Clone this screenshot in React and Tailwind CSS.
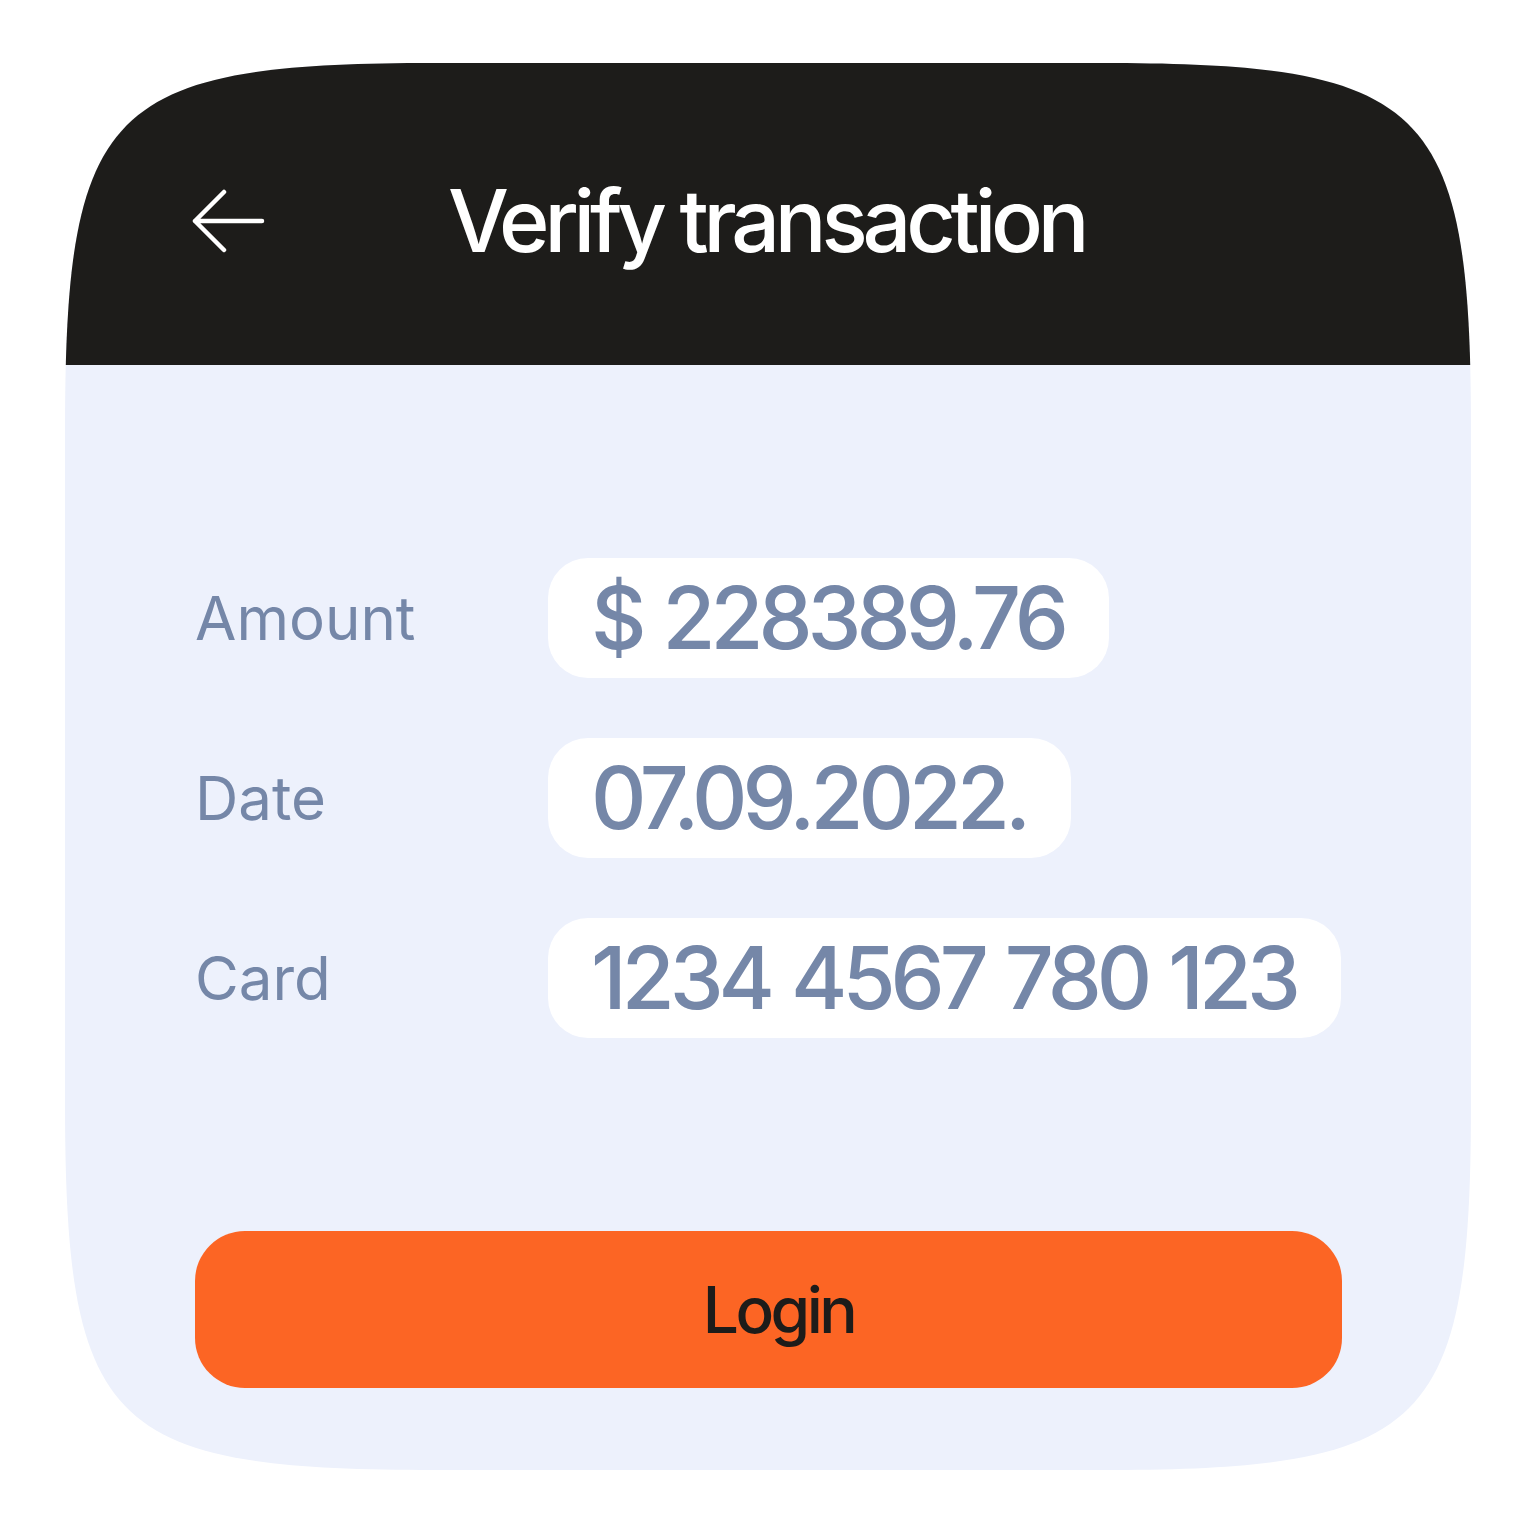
import React from "react";

const rows = [
  { label: "Amount", value: "$ 228389.76" },
  { label: "Date", value: "07.09.2022." },
  { label: "Card", value: "1234 4567 780 123" },
];

const BackArrow = () => (
  <svg width="74" height="64" viewBox="0 0 74 64" fill="none">
    <path
      d="M70 32H3M32 3L3 32L32 61"
      stroke="white"
      strokeWidth="4.5"
      strokeLinecap="round"
      strokeLinejoin="round"
    />
  </svg>
);

export default function App() {
  return (
    <div className="w-[1536px] h-[1536px] bg-white pt-[63px] pl-[65px] font-['Inter','Liberation_Sans',sans-serif]">
      <div className="w-[1406px] h-[1407px] flex flex-col bg-[#edf1fc] [clip-path:path('M0,370C0,42,42,0,370,0L1036,0C1364,0,1406,42,1406,370L1406,1037C1406,1365,1364,1407,1036,1407L370,1407C42,1407,0,1365,0,1037Z')]">
        {/* header */}
        <div className="h-[302px] bg-[#1d1c1a] flex items-center pl-[127px] pt-[14px]">
          <BackArrow />
          <h1 className="ml-[182px] text-white text-[86px] font-medium tracking-[-5.2px] leading-none">
            Verify transaction
          </h1>
        </div>

        {/* details */}
        <div className="flex-1 flex flex-col pl-[130px] pt-[193px]">
          <div className="flex flex-col gap-[60px]">
            {rows.map((row) => (
              <div key={row.label} className="flex items-center">
                <span className="w-[353px] text-[60px] text-[#7587a8] leading-none">
                  {row.label}
                </span>
                <div className="h-[120px] flex items-center pl-[43px] pr-[45px] rounded-[40px] bg-white">
                  <span className="text-[86px] font-medium text-[#7587a8] leading-none tracking-[-5px] [word-spacing:3px]">
                    {row.value}
                  </span>
                </div>
              </div>
            ))}
          </div>

          <button className="mt-[193px] w-[1147px] h-[157px] pl-[20px] rounded-[50px] bg-[#fc6524] text-[#1d1c1a] text-[64px] font-medium leading-none tracking-[-3.5px]">
            Login
          </button>
        </div>
      </div>
    </div>
  );
}
